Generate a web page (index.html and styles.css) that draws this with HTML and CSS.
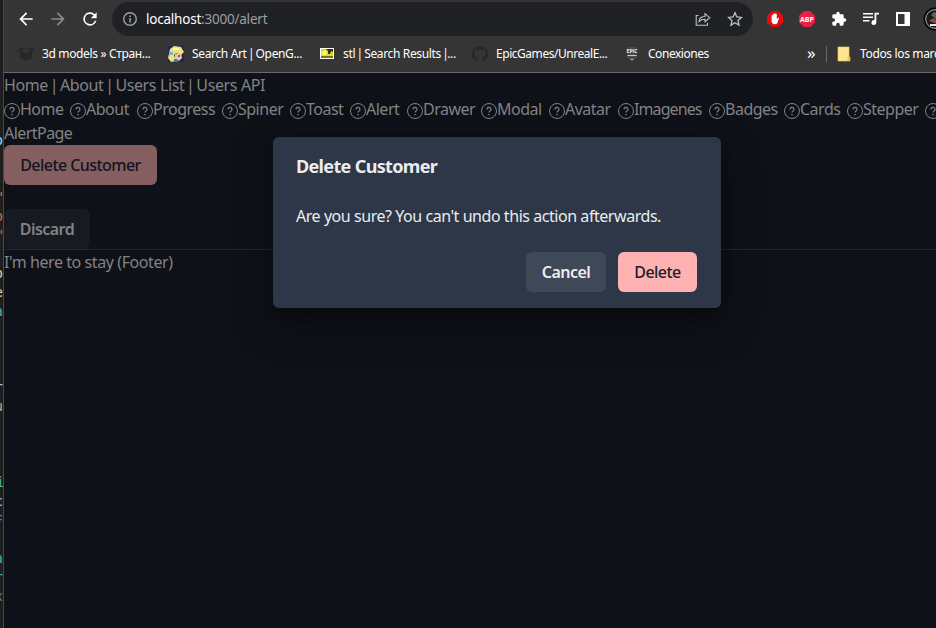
FILE: index.html
```html
<!DOCTYPE html>
<html lang="en">
<head>
<meta charset="utf-8">
<title>Alert</title>
<link rel="stylesheet" href="styles.css">
</head>
<body>
<svg class="defs" width="0" height="0">
  <symbol id="q" viewBox="0 0 16 16"><circle cx="8" cy="8" r="7.5" fill="none" stroke="currentColor"/><path d="M6 6.4a2 2 0 1 1 3 1.7c-.7.4-1 .7-1 1.5" fill="none" stroke="currentColor" stroke-width="1.2"/><circle cx="8" cy="11.6" r=".8" fill="currentColor"/></symbol>
</svg>
<div class="desktop">
  <aside class="editor">
    <span class="c-blue">p</span><span></span><span></span><span class="c-orange tick">'</span><span class="c-orange">p</span><span class="c-orange tick">'</span><span></span><span class="c-yellow">p</span><span class="c-yellow">e</span><span class="c-green">a</span><span></span><span></span><span></span><span class="c-blue">r</span><span class="c-tan">u</span><span></span><span></span><span></span><span class="c-green narrow">i</span><span class="c-blue">c</span><span class="c-azure">F</span><span></span><span class="c-green">a</span><span class="c-green">r</span><span class="c-gray">x</span>
  </aside>
  <div class="browser">
    <header class="toolbar">
      <svg class="nav-btn" viewBox="0 0 24 24"><path d="M20 11H7.8l5.6-5.6L12 4l-8 8 8 8 1.4-1.4L7.8 13H20z"/></svg>
      <svg class="nav-btn dim" viewBox="0 0 24 24"><path d="M4 11h12.2l-5.6-5.6L12 4l8 8-8 8-1.4-1.4 5.6-5.6H4z"/></svg>
      <svg class="nav-btn" viewBox="0 0 24 24"><path d="M17.65 6.35A8 8 0 1 0 19.73 14h-2.08A6 6 0 1 1 12 6c1.66 0 3.14.69 4.22 1.78L13 11h7V4z"/></svg>
      <div class="omnibox">
        <svg class="info" viewBox="0 0 16 16"><circle cx="8" cy="8" r="6.3" fill="none" stroke="currentColor" stroke-width="1.4"/><path d="M7.3 7h1.5v4.4H7.3zM7.3 4.4h1.5v1.5H7.3z" fill="currentColor"/></svg>
        <div class="url"><b>localhost</b>:3000/alert</div>
        <svg class="share" viewBox="0 0 16 16"><path d="M3.500 4.500H1.200v9.800h11.300v-2.500M4 10.500c.5-3.500 2.500-5 6-5V2.700l4.700 4-4.700 4V8.200C7.500 8.200 5.500 9 4 10.500z" fill="none" stroke="currentColor" stroke-width="1.1"/></svg>
        <svg class="star" viewBox="0 0 16 16"><path d="M8 1.700l1.900 4.300 4.600.4-3.500 3.100 1 4.600L8 11.700l-4 2.400 1-4.600-3.500-3.100 4.600-.4z" fill="none" stroke="currentColor" stroke-width="1.3"/></svg>
      </div>
      <div class="extensions">
        <svg viewBox="0 0 16 16"><path d="M4.700 0h6.600L16 4.700v6.600L11.300 16H4.700L0 11.300V4.700z" fill="#e40d0d"/><path d="M4.600 9V4.500q.6-.8 1.200 0V3.200q.7-.8 1.300 0v-.6q.7-.8 1.400 0v.6q.7-.8 1.300 0v5l1.100-1.300q.8-.6 1.200.1L10.300 12q-.8 1.400-2.500 1.300Q4.600 13 4.600 10z" fill="#fff"/></svg>
        <svg viewBox="0 0 16 16"><path d="M4.700 0h6.600L16 4.700v6.600L11.300 16H4.700L0 11.300V4.700z" fill="#ed1e45"/><text x="8" y="10.700" class="abp">ABP</text></svg>
        <svg viewBox="0 0 24 24"><path d="M20.500 11H19V7a2 2 0 0 0-2-2h-4V3.500a2.500 2.500 0 0 0-5 0V5H4a2 2 0 0 0-2 2v3.800h1.500a2.700 2.700 0 0 1 0 5.400H2V20c0 1.100.9 2 2 2h3.800v-1.500a2.700 2.700 0 0 1 5.400 0V22H17a2 2 0 0 0 2-2v-4h1.500a2.500 2.500 0 0 0 0-5z" fill="#fff"/></svg>
        <svg viewBox="0 0 16 16"><path d="M0 2h10v1.500H0zM0 5.500h10V7H0zM0 9h6.500v1.500H0zM11.500 1.800H16v1.700h-2.700v8a2.400 2.400 0 1 1-1.800-2.300z" fill="#fff"/></svg>
        <svg viewBox="0 0 16 16"><path d="M1 1h14v14H1zM3 3v10h6.500V3z" fill="#fff" fill-rule="evenodd"/></svg>
        <svg class="avatar" viewBox="0 0 24 24"><circle cx="12" cy="12" r="11.500" fill="#050607"/><circle cx="12" cy="12" r="9.300" fill="#181b1c" stroke="#a9b9c4"/><path d="M8 8l3-3 5 2-2 6z" fill="#576b45"/><path d="M6 14l4-3 4 2v4z" fill="#854c46"/><path d="M7 17h10v2H7z" fill="#e7e7df"/></svg>
      </div>
    </header>
    <nav class="bookmarks">
      <a class="bm"><svg viewBox="0 0 16 16"><path d="M3 1l5 2 5-2 3 3-2 3v5l-6 3-6-3V7L0 4z" fill="#272828"/><path d="M3.500 4.800L8 3l4.500 1.800L8 7z" fill="#383838"/></svg><span class="t1">3d models » Стран...</span></a>
      <a class="bm"><svg viewBox="0 0 16 16"><path d="M0 0h16v16H0z" fill="#202651"/><path d="M2 3l4-3 7 1 3 5-3 3-5-2-2 2 2 6-5 1-3-4z" fill="#efe27b"/><path d="M7 8l6-1 1 5-3 3-4-2z" fill="#efc49a"/><path d="M1 6h4v3H1z" fill="#72b8c1"/><path d="M10 9h2v2h-2zM6 13l5 1-1 2H6z" fill="#3d7897"/><path d="M4 2h7v2H6z" fill="#fff8c1"/></svg><span class="t2">Search Art <i>|</i> OpenG...</span></a>
      <a class="bm"><svg viewBox="0 0 16 16"><path d="M1 2h14v11H1z" fill="#fff"/><path d="M2 3h12v9H2z" fill="#d9dc20"/><path d="M7 3h7v3l-2-1-1 3H9V5z" fill="#302f0b"/><path d="M2 10h12v2H2z" fill="#77740e"/><circle cx="5.500" cy="7" r="2.300" fill="#faff69"/></svg><span class="t3">stl <i>|</i> Search Results <i>|</i>...</span></a>
      <a class="bm"><svg viewBox="0 0 16 16"><path d="M8 0a8 8 0 0 0-2.500 15.600V13c-2 .5-2.500-.7-3-1.500 1-.2 1.600.8 2.200 1 .5-.1.8-.8 1-1-2-.4-3.300-1.200-3.300-4 0-1 .3-1.700.8-2.300-.2-.9-.1-1.700.2-2.300 1 0 1.600.5 2.200.9a8 8 0 0 1 4.800 0c.7-.4 1.200-.9 2.200-.9.3.6.4 1.400.2 2.300.5.600.8 1.300.8 2.300 0 2.800-1.300 3.600-3.300 4 .4.400.5 1 .5 1.700v2.400A8 8 0 0 0 8 0z" fill="#25292f"/></svg><span class="t4">EpicGames/UnrealE...</span></a>
      <a class="bm"><svg viewBox="0 0 16 16"><path d="M3 1h10v11l-5 2-5-2z" fill="#484848"/><text x="8" y="7" class="epic">EPIC</text><path d="M3.500 9h9v1h-9zM6 13h4l-2 1.500z" fill="#c6c6c6"/></svg><span class="t5">Conexiones</span></a>
      <span class="more">»</span>
      <a class="bm all"><svg viewBox="0 0 16 16"><path d="M2 1h11v10h1v4H2z" fill="#ffe592" stroke="#e8c65a" stroke-width=".7"/><path d="M11.500 11H14v4h-2.500z" fill="#e9c04a"/></svg><span class="t6">Todos los marcadores</span></a>
    </nav>
    <main class="page">
      <div class="line links">Home <i>|</i> About <i>|</i> Users List <i>|</i> Users API</div>
      <nav class="menu">
        <a><svg><use href="#q"/></svg>Home</a><a><svg><use href="#q"/></svg>About</a><a><svg><use href="#q"/></svg>Progress</a><a><svg><use href="#q"/></svg>Spiner</a><a><svg><use href="#q"/></svg>Toast</a><a><svg><use href="#q"/></svg>Alert</a><a><svg><use href="#q"/></svg>Drawer</a><a><svg><use href="#q"/></svg>Modal</a><a><svg><use href="#q"/></svg>Avatar</a><a class="tight"><svg><use href="#q"/></svg>Imagenes</a><a><svg><use href="#q"/></svg>Badges</a><a><svg><use href="#q"/></svg>Cards</a><a><svg><use href="#q"/></svg>Stepper</a><a><svg><use href="#q"/></svg></a>
      </nav>
      <div class="line alert-page">AlertPage</div>
      <button class="btn delete-customer">Delete Customer</button>
      <button class="btn discard">Discard</button>
      <footer class="line"><span class="foot">I'm here to stay (Footer)</span></footer>
    </main>
  </div>
  <section class="dialog" role="alertdialog">
    <h2><span>Delete Customer</span></h2>
    <p>Are you sure? You can't undo this action afterwards.</p>
    <div class="actions"><button class="btn cancel">Cancel</button><button class="btn delete">Delete</button></div>
  </section>
</div>
</body>
</html>
```
FILE: styles.css
```css
* { box-sizing: border-box; }
body { margin: 0; width: 936px; height: 628px; overflow: hidden; background: #0e1118; font-family: "Noto Sans", "Open Sans", sans-serif; }
svg { display: block; flex: none; }
i { font-style: normal; }
.defs { position: absolute; }
.desktop { position: relative; display: flex; height: 628px; }
.editor { width: 4px; flex: none; overflow: hidden; border-right: 1px solid #484848; background: #1e1e1e; padding-top: 131px; font: 14px/19px "DejaVu Sans Mono", monospace; display: flex; flex-direction: column; align-items: flex-end; }
.editor span { height: 19px; flex: none; }
.editor .tick { margin-right: -2.5px; }
.editor .narrow { margin-right: -1.5px; }
.c-blue { color: #9cdcfe; }
.c-orange { color: #d9703f; }
.c-yellow { color: #dcdc9a; }
.c-green { color: #45b894; }
.c-tan { color: #c3a078; }
.c-azure { color: #2490dd; }
.c-gray { color: #777; }
.browser { width: 932px; flex: none; overflow: hidden; }
.toolbar { height: 38px; background: #353535; display: flex; align-items: center; padding-left: 12px; }
.nav-btn { width: 20px; height: 20px; margin-right: 12px; fill: #fff; }
.nav-btn.dim { fill: #8b8b8b; }
.omnibox { width: 641px; height: 34px; flex: none; border-radius: 17px; background: #202124; display: flex; align-items: center; color: #bdc1c6; padding: 0 10px; }
.info { width: 16px; height: 16px; color: #9aa0a6; }
.url { margin-left: 8px; flex: 1; font-size: 13.5px; letter-spacing: -0.22px; color: #9aa0a6; }
.url b { font-weight: 400; color: #fff; }
.share { width: 16px; height: 16px; margin-right: 16px; }
.star { width: 16px; height: 16px; }
.extensions { display: flex; flex: none; align-items: center; gap: 16px; margin-left: 14px; }
.extensions svg { width: 16px; height: 16px; }
.extensions .avatar { width: 24px; height: 24px; margin-left: -4px; }
.abp { font: 700 7px "Open Sans", sans-serif; fill: #fff; text-anchor: middle; }
.bookmarks { height: 35px; background: #353535; border-bottom: 1px solid #696969; display: grid; grid-template-columns: 150px 151px 153px 152px 197px 19px 140px; padding: 0 0 2px 14px; align-items: center; color: #fff; font-size: 12px; letter-spacing: -0.35px; white-space: nowrap; }
.bookmarks i { margin: 0 -1.4px; }
.bm { display: flex; align-items: center; gap: 8px; }
.bm svg { width: 16px; height: 16px; }
.bm span { margin-top: -1px; }
.t4, .t5 { letter-spacing: -0.46px; }
.epic { font: 700 5px "Open Sans", sans-serif; fill: #eee; text-anchor: middle; letter-spacing: 0; }
.more { font-size: 17px; line-height: 18px; margin-left: -14px; margin-top: -3px; }
.all { height: 16px; border-left: 1px solid #686868; margin-left: -14px; padding-left: 9px; }
.page { height: 555px; color: #828385; font-size: 16px; line-height: 24px; white-space: nowrap; }
.line { height: 24px; letter-spacing: -0.42px; }
.links { word-spacing: 0.3px; }
.links i { margin: 0 -2.2px; }
.alert-page { letter-spacing: -0.55px; }
.menu { height: 24px; display: grid; grid-template-columns: 66px 67px 85px 68px 60px 57px 74px 68px 69px 91px 75px 63px 78px 16px; letter-spacing: -0.5px; }
.menu a { display: flex; }
.menu .tight { letter-spacing: -0.9px; }
.menu svg { width: 16px; height: 16px; margin-top: 6px; }
.btn { display: block; height: 40px; padding: 0; border: 0; border-radius: 6px; font: 600 16px/40px "Noto Sans", "Open Sans", sans-serif; letter-spacing: -0.55px; text-align: center; }
.delete-customer { width: 153px; background: #855e5f; color: #111520; font-weight: 500; }
.discard { width: 86px; margin-top: 24px; background: #171a21; color: #828385; }
.page footer { border-top: 1px solid #24272d; height: 26px; }
.dialog { position: absolute; left: 273px; top: 137px; width: 448px; height: 171px; border-radius: 6px; background: #2d3748; color: #ebecee; box-shadow: 0 5px 10px rgba(0,0,0,.2), 0 15px 40px rgba(0,0,0,.4); padding: 16px 24px 16px 23px; display: flex; flex-direction: column; white-space: nowrap; }
.dialog h2 { margin: 0; font-size: 18px; line-height: 27px; font-weight: 700; letter-spacing: -0.65px; }
.dialog p { margin: 24px 0 0; font-size: 16px; line-height: 24px; letter-spacing: -0.45px; }
.actions { display: flex; justify-content: flex-end; gap: 12px; margin-top: 24px; }
.cancel { width: 80px; background: #3f4857; color: #ebecee; }
.delete { width: 79px; background: #feb2b2; color: #1a202c; font-weight: 500; }
```
